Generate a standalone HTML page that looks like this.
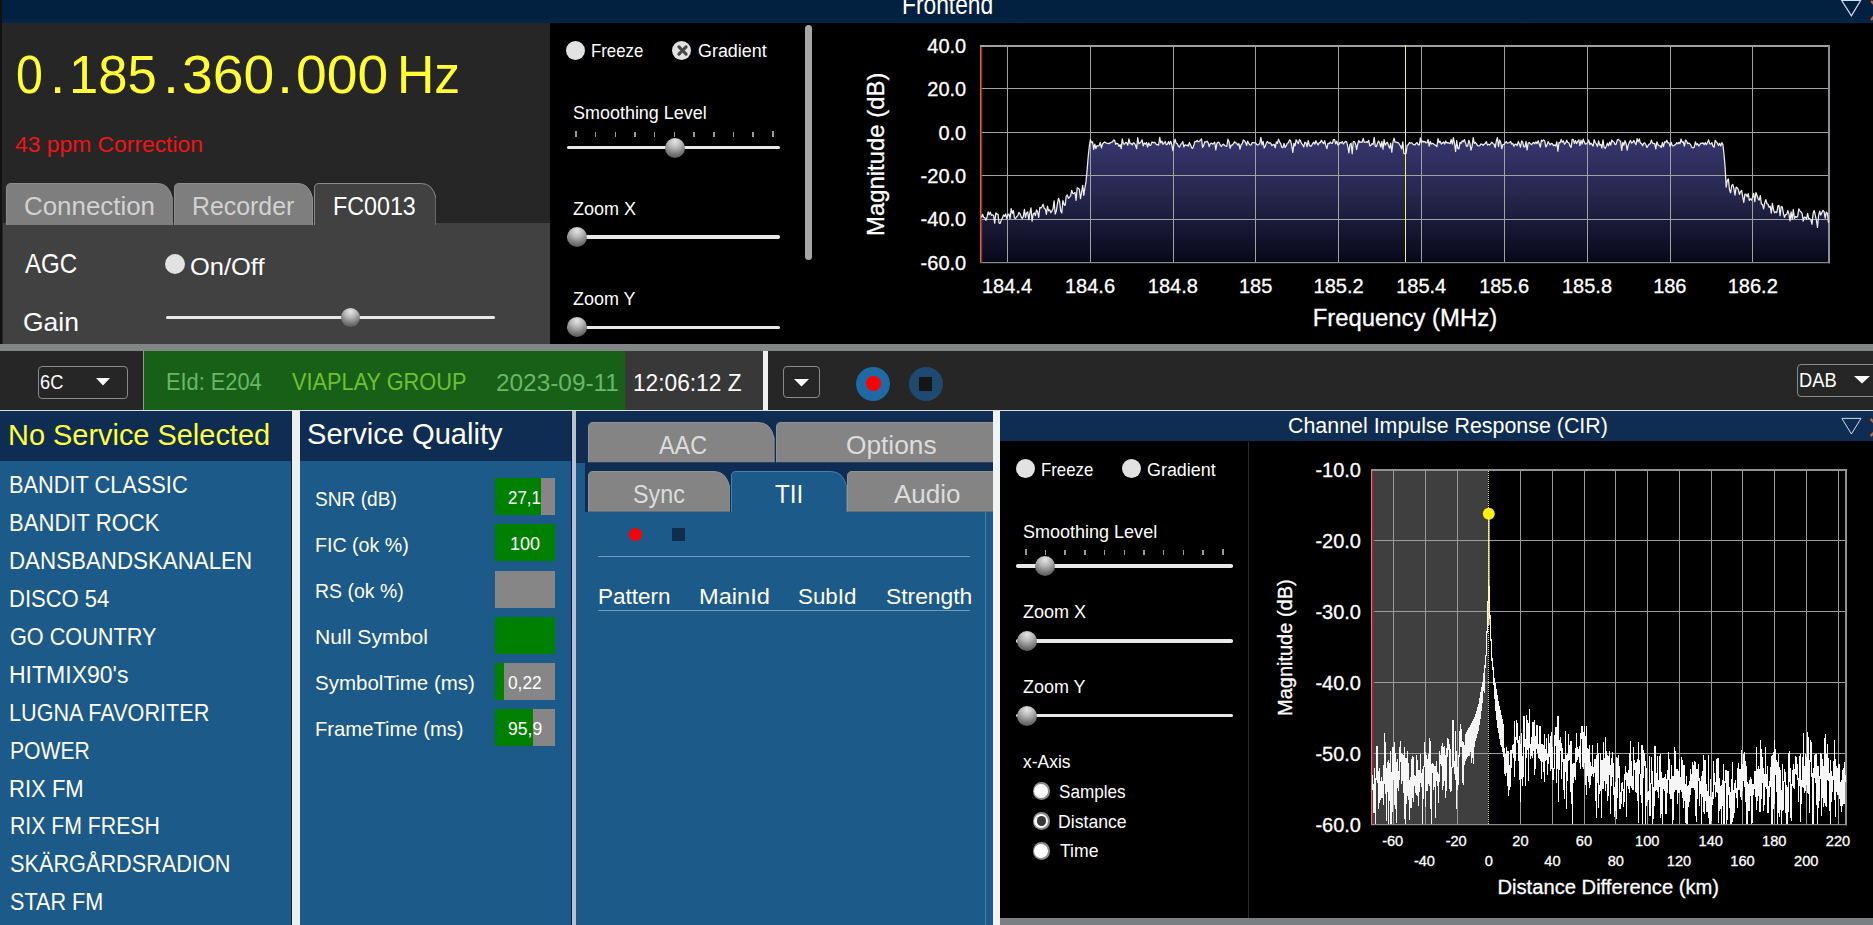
<!DOCTYPE html>
<html><head><meta charset="utf-8"><title>DAB Frontend</title>
<style>
html,body{margin:0;padding:0;background:#000;}
body{width:1873px;height:925px;position:relative;overflow:hidden;font-family:"Liberation Sans",sans-serif;}
.r{position:absolute;display:block;}
.t{position:absolute;display:block;white-space:pre;line-height:1;transform-origin:0 50%;}
.c{-webkit-text-stroke:0.3px #fff;}
</style></head><body>
<div class="r" style="left:0px;top:0px;width:1873px;height:22.8px;background:linear-gradient(#022040,#022040 75%,#06264a);"></div>
<span class="t" style="left:901.68px;top:-7.76px;font-size:27.00px;color:#fff;transform:scaleX(0.8433);">Frontend</span>
<svg class="r" style="left:1836px;top:0" width="37" height="23"><path d="M5.7 0.5 L24.6 0.5 L15.4 15.9 Z" fill="none" stroke="#cfe0f5" stroke-width="1.2"/><path d="M35 1 L40 6 M35 20 L40 14" stroke="#c0673a" stroke-width="2.4"/></svg>
<div class="r" style="left:0px;top:23px;width:550px;height:322px;background:#262626;"></div>
<div class="r" style="left:0px;top:0px;width:1.5px;height:925px;background:#111;"></div>
<span class="t" style="left:15.97px;top:46.69px;font-size:54.00px;color:#ffff33;transform:scaleX(0.8946);">0</span>
<span class="t" style="left:49.76px;top:46.69px;font-size:54.00px;color:#ffff33;transform:scaleX(1.0159);">.</span>
<span class="t" style="left:68.86px;top:46.69px;font-size:54.00px;color:#ffff33;transform:scaleX(0.9736);">185</span>
<span class="t" style="left:163.39px;top:46.69px;font-size:54.00px;color:#ffff33;transform:scaleX(1.0713);">.</span>
<span class="t" style="left:182.19px;top:46.69px;font-size:54.00px;color:#ffff33;transform:scaleX(1.0236);">360</span>
<span class="t" style="left:277.09px;top:46.69px;font-size:54.00px;color:#ffff33;transform:scaleX(1.0713);">.</span>
<span class="t" style="left:296.39px;top:46.69px;font-size:54.00px;color:#ffff33;transform:scaleX(1.0225);">000</span>
<span class="t" style="left:396.66px;top:46.69px;font-size:54.00px;color:#ffff33;transform:scaleX(0.9582);">Hz</span>
<span class="t" style="left:15.04px;top:134.38px;font-size:22.00px;color:#f01414;transform:scaleX(1.0386);">43 ppm Correction</span>
<div class="r" style="left:3px;top:223px;width:547.5px;height:121.6px;background:#414141;"></div>
<svg class="r" style="left:6.3px;top:182.9px" width="166.79999999999998" height="42.099999999999994"><path d="M0.5 42.099999999999994 L0.5 5 Q0.5 0.5 5 0.5 L151.79999999999998 0.5 Q163.0 0.5 166.29999999999998 15 L166.29999999999998 42.099999999999994 Z" fill="#7e7e7e"/><path d="M0.5 42.099999999999994 L0.5 5 Q0.5 0.5 5 0.5 L151.79999999999998 0.5 Q163.0 0.5 166.29999999999998 15 L166.29999999999998 42.099999999999994" fill="none" stroke="#8e8e8e" stroke-width="1"/></svg>
<svg class="r" style="left:174.4px;top:182.9px" width="138.99999999999997" height="42.099999999999994"><path d="M0.5 42.099999999999994 L0.5 5 Q0.5 0.5 5 0.5 L123.99999999999997 0.5 Q135.2 0.5 138.49999999999997 15 L138.49999999999997 42.099999999999994 Z" fill="#7e7e7e"/><path d="M0.5 42.099999999999994 L0.5 5 Q0.5 0.5 5 0.5 L123.99999999999997 0.5 Q135.2 0.5 138.49999999999997 15 L138.49999999999997 42.099999999999994" fill="none" stroke="#8e8e8e" stroke-width="1"/></svg>
<svg class="r" style="left:313.5px;top:182.9px" width="122.5" height="42.599999999999994"><path d="M0.5 42.599999999999994 L0.5 5 Q0.5 0.5 5 0.5 L107.5 0.5 Q118.8 0.5 122.0 15 L122.0 42.599999999999994 Z" fill="#414141"/><path d="M0.5 42.599999999999994 L0.5 5 Q0.5 0.5 5 0.5 L107.5 0.5 Q118.8 0.5 122.0 15 L122.0 42.599999999999994" fill="none" stroke="#8a8a8a" stroke-width="1"/></svg>
<span class="t" style="left:24.41px;top:194.47px;font-size:25.44px;color:#d2d2d2;transform:scaleX(1.0175);">Connection</span>
<span class="t" style="left:192.01px;top:194.47px;font-size:25.44px;color:#d2d2d2;transform:scaleX(0.9779);">Recorder</span>
<span class="t" style="left:332.74px;top:194.27px;font-size:25.44px;color:#fff;transform:scaleX(0.9144);">FC0013</span>
<span class="t" style="left:24.50px;top:250.96px;font-size:26.74px;color:#fff;transform:scaleX(0.9026);">AGC</span>
<div class="r" style="left:165px;top:253.5px;width:20px;height:20px;background:#e2e2e2;border-radius:50%"></div>
<span class="t" style="left:190.15px;top:255.38px;font-size:24.71px;color:#fff;transform:scaleX(1.0299);">On/Off</span>
<span class="t" style="left:23.18px;top:309.01px;font-size:26.45px;color:#fff;transform:scaleX(1.0008);">Gain</span>
<div class="r" style="left:165.6px;top:315.5px;width:329.0px;height:3.6px;background:#e8e8e8;border-radius:1.8px"></div>
<div class="r" style="left:341.1px;top:307.8px;width:19.0px;height:19.0px;background:radial-gradient(circle at 50% 18%,#e6e6e6,#b4b4b4 35%,#7a7a7a 65%,#4a4a4a 95%);border-radius:50%"></div>
<div class="r" style="left:550px;top:23px;width:1323px;height:321.5px;background:#000;"></div>
<div class="r" style="left:565.9px;top:40.7px;width:19.0px;height:19.0px;background:#e2e2e2;border-radius:50%"></div>
<span class="t" style="left:590.66px;top:41.87px;font-size:18.46px;color:#fff;transform:scaleX(0.9106);">Freeze</span>
<div class="r" style="left:672.2px;top:40.7px;width:19.0px;height:19.0px;background:#e2e2e2;border-radius:50%"></div>
<svg class="r" style="left:672.5px;top:40.7px" width="19" height="19"><path d="M5.9 5.9 L13.1 13.1 M13.1 5.9 L5.9 13.1" stroke="#484848" stroke-width="3.1" stroke-linecap="round"/></svg>
<span class="t" style="left:697.50px;top:41.87px;font-size:18.46px;color:#fff;transform:scaleX(0.9714);">Gradient</span>
<span class="t" style="left:572.79px;top:103.77px;font-size:18.46px;color:#fff;transform:scaleX(0.9738);">Smoothing Level</span>
<div class="r" style="left:575.1px;top:131px;width:1.6px;height:6px;background:#9a9a9a;"></div>
<div class="r" style="left:594.8px;top:132px;width:1.6px;height:5px;background:#9a9a9a;"></div>
<div class="r" style="left:614.5px;top:132px;width:1.6px;height:5px;background:#9a9a9a;"></div>
<div class="r" style="left:634.2px;top:132px;width:1.6px;height:5px;background:#9a9a9a;"></div>
<div class="r" style="left:653.9px;top:132px;width:1.6px;height:5px;background:#9a9a9a;"></div>
<div class="r" style="left:673.6px;top:132px;width:1.6px;height:5px;background:#9a9a9a;"></div>
<div class="r" style="left:693.3px;top:132px;width:1.6px;height:5px;background:#9a9a9a;"></div>
<div class="r" style="left:713.0px;top:132px;width:1.6px;height:5px;background:#9a9a9a;"></div>
<div class="r" style="left:732.7px;top:132px;width:1.6px;height:5px;background:#9a9a9a;"></div>
<div class="r" style="left:752.4px;top:132px;width:1.6px;height:5px;background:#9a9a9a;"></div>
<div class="r" style="left:772.1px;top:131px;width:1.6px;height:6px;background:#9a9a9a;"></div>
<div class="r" style="left:566.6px;top:145.7px;width:213.29999999999995px;height:3.6px;background:#e8e8e8;border-radius:1.8px"></div>
<div class="r" style="left:664.5px;top:137.5px;width:20px;height:20px;background:radial-gradient(circle at 50% 18%,#e6e6e6,#b4b4b4 35%,#7a7a7a 65%,#4a4a4a 95%);border-radius:50%"></div>
<span class="t" style="left:572.86px;top:200.47px;font-size:18.46px;color:#fff;transform:scaleX(0.9777);">Zoom X</span>
<div class="r" style="left:566.6px;top:235.2px;width:213.29999999999995px;height:3.6px;background:#e8e8e8;border-radius:1.8px"></div>
<div class="r" style="left:566.6px;top:227px;width:20px;height:20px;background:radial-gradient(circle at 50% 18%,#e6e6e6,#b4b4b4 35%,#7a7a7a 65%,#4a4a4a 95%);border-radius:50%"></div>
<span class="t" style="left:572.86px;top:289.97px;font-size:18.46px;color:#fff;transform:scaleX(0.9725);">Zoom Y</span>
<div class="r" style="left:566.6px;top:325.59999999999997px;width:213.29999999999995px;height:3.6px;background:#e8e8e8;border-radius:1.8px"></div>
<div class="r" style="left:566.6px;top:317.4px;width:20px;height:20px;background:radial-gradient(circle at 50% 18%,#e6e6e6,#b4b4b4 35%,#7a7a7a 65%,#4a4a4a 95%);border-radius:50%"></div>
<div class="r" style="left:804.5px;top:24.5px;width:7px;height:235.5px;background:#a6a6a6;border-radius:3.5px"></div>
<svg class="r" style="left:981px;top:45.0px;overflow:visible" width="848.5" height="217.0"><defs><linearGradient id="g1" x1="0" y1="0" x2="0" y2="1"><stop offset="0" stop-color="#36366e"/><stop offset="0.45" stop-color="#27274f"/><stop offset="1" stop-color="#08081a"/></linearGradient></defs><polygon points="0,217.0 0.5,172.5 1.6,169.3 2.7,172.4 3.8,172.7 4.9,175.3 6.0,172.3 7.1,166.8 8.2,169.7 9.3,167.1 10.4,170.4 11.5,169.8 12.6,170.6 13.7,178.2 14.8,167.8 15.9,169.2 17.0,169.2 18.1,178.2 19.2,178.4 20.3,174.9 21.4,173.1 22.5,169.9 23.6,171.3 24.7,168.9 25.8,173.6 26.9,169.6 28.0,169.2 29.1,173.5 30.2,163.6 31.3,168.3 32.4,165.6 33.5,173.0 34.6,173.4 35.7,171.7 36.8,170.6 37.9,167.4 39.0,168.8 40.1,171.6 41.2,173.5 42.3,171.6 43.4,164.3 44.5,172.4 45.6,167.9 46.7,167.0 47.8,174.7 48.9,168.2 50.0,162.8 51.1,176.2 52.2,169.0 53.3,167.9 54.4,170.6 55.5,164.9 56.6,166.9 57.7,172.4 58.8,162.7 59.9,163.0 61.0,161.6 62.1,159.2 63.2,163.3 64.3,164.0 65.4,169.4 66.5,161.2 67.6,165.8 68.7,164.8 69.8,167.7 70.9,166.1 72.0,163.8 73.1,155.9 74.2,169.1 75.3,166.2 76.4,158.7 77.5,153.3 78.6,156.3 79.7,166.0 80.8,168.0 81.9,155.5 83.0,159.5 84.1,160.4 85.2,151.2 86.3,150.0 87.4,153.3 88.5,152.2 89.6,150.8 90.7,145.3 91.8,148.6 92.9,148.3 94.0,147.4 95.1,155.3 96.2,142.8 97.3,143.3 98.4,144.2 99.5,153.7 100.6,147.3 101.7,140.4 102.8,150.4 103.9,142.8 105.0,136.8 106.1,125.4 107.2,111.8 108.3,101.3 109.4,94.6 110.5,97.6 111.6,96.8 112.7,104.3 113.8,99.2 114.9,103.5 116.0,100.6 117.1,100.8 118.2,100.6 119.3,97.4 120.4,102.9 121.5,99.2 122.6,97.7 123.7,96.9 124.8,97.7 125.9,98.3 127.0,98.3 128.1,98.6 129.2,97.9 130.3,97.3 131.4,96.9 132.5,95.1 133.6,95.2 134.7,99.3 135.8,98.2 136.9,98.7 138.0,101.4 139.1,99.6 140.2,103.6 141.3,93.8 142.4,98.9 143.5,99.2 144.6,97.3 145.7,97.9 146.8,100.3 147.9,93.9 149.0,98.7 150.1,98.4 151.2,99.9 152.3,97.8 153.4,98.2 154.5,100.3 155.6,103.6 156.7,92.6 157.8,98.7 158.9,98.1 160.0,96.8 161.1,94.8 162.2,100.9 163.3,98.0 164.4,99.2 165.5,97.5 166.6,102.0 167.7,97.8 168.8,100.3 169.9,100.1 171.0,96.9 172.1,97.7 173.2,97.3 174.3,97.9 175.4,99.5 176.5,99.5 177.6,100.1 178.7,92.3 179.8,97.8 180.9,96.1 182.0,99.3 183.1,97.9 184.2,96.6 185.3,99.8 186.4,99.2 187.5,96.5 188.6,99.4 189.7,96.3 190.8,99.6 191.9,105.6 193.0,98.9 194.1,94.2 195.2,98.2 196.3,98.8 197.4,101.2 198.5,102.1 199.6,99.7 200.7,98.3 201.8,96.5 202.9,101.9 204.0,99.8 205.1,100.4 206.2,100.1 207.3,101.0 208.4,97.5 209.5,99.8 210.6,102.7 211.7,103.4 212.8,100.3 213.9,96.5 215.0,96.6 216.1,95.3 217.2,96.8 218.3,96.3 219.4,95.3 220.5,93.9 221.6,102.3 222.7,100.4 223.8,96.7 224.9,97.0 226.0,96.2 227.1,97.6 228.2,101.6 229.3,98.7 230.4,98.1 231.5,99.1 232.6,98.4 233.7,97.2 234.8,104.9 235.9,98.5 237.0,97.1 238.1,97.6 239.2,99.9 240.3,101.5 241.4,99.8 242.5,99.2 243.6,100.5 244.7,101.0 245.8,101.4 246.9,94.2 248.0,96.5 249.1,103.2 250.2,100.0 251.3,100.0 252.4,98.6 253.5,96.8 254.6,97.8 255.7,98.2 256.8,100.2 257.9,98.6 259.0,104.1 260.1,99.7 261.2,98.8 262.3,95.0 263.4,95.7 264.5,97.1 265.6,100.3 266.7,96.2 267.8,98.5 268.9,99.8 270.0,100.1 271.1,97.7 272.2,97.7 273.3,97.8 274.4,97.5 275.5,99.2 276.6,99.9 277.7,99.6 278.8,98.0 279.9,92.4 281.0,99.8 282.1,96.4 283.2,103.0 284.3,101.0 285.4,97.9 286.5,96.5 287.6,98.2 288.7,97.8 289.8,98.2 290.9,100.7 292.0,99.7 293.1,99.3 294.2,102.9 295.3,97.0 296.4,98.4 297.5,94.1 298.6,97.1 299.7,98.7 300.8,102.4 301.9,102.6 303.0,98.4 304.1,102.5 305.2,100.7 306.3,98.2 307.4,97.7 308.5,94.9 309.6,95.6 310.7,100.7 311.8,107.3 312.9,98.3 314.0,101.0 315.1,94.9 316.2,96.8 317.3,98.7 318.4,94.6 319.5,95.7 320.6,98.7 321.7,99.9 322.8,101.9 323.9,97.2 325.0,97.7 326.1,101.8 327.2,95.5 328.3,99.9 329.4,101.4 330.5,100.8 331.6,98.6 332.7,97.1 333.8,99.2 334.9,95.8 336.0,98.0 337.1,100.0 338.2,97.7 339.3,97.6 340.4,95.4 341.5,97.1 342.6,98.7 343.7,95.6 344.8,100.6 345.9,103.6 347.0,98.3 348.1,98.7 349.2,97.1 350.3,98.2 351.4,98.4 352.5,94.5 353.6,94.7 354.7,98.8 355.8,96.2 356.9,100.1 358.0,99.4 359.1,97.3 360.2,98.0 361.3,96.7 362.4,99.0 363.5,97.5 364.6,96.3 365.7,97.1 366.8,101.3 367.9,107.9 369.0,99.4 370.1,98.2 371.2,108.8 372.3,96.5 373.4,96.5 374.5,98.7 375.6,104.5 376.7,99.2 377.8,95.5 378.9,97.5 380.0,97.0 381.1,97.4 382.2,93.4 383.3,97.3 384.4,97.2 385.5,96.9 386.6,97.4 387.7,95.4 388.8,100.8 389.9,100.5 391.0,98.6 392.1,99.3 393.2,92.4 394.3,101.4 395.4,101.6 396.5,98.3 397.6,96.0 398.7,98.0 399.8,102.1 400.9,96.3 402.0,104.2 403.1,94.5 404.2,100.2 405.3,98.3 406.4,97.2 407.5,100.5 408.6,103.2 409.7,98.1 410.8,107.2 411.9,97.7 413.0,93.2 414.1,97.1 415.2,97.1 416.3,97.6 417.4,97.7 418.5,99.5 419.6,101.1 420.7,103.9 421.8,96.9 422.9,108.5 424.0,108.5 425.1,108.5 426.2,100.2 427.3,99.8 428.4,97.5 429.5,98.2 430.6,97.7 431.7,98.9 432.8,99.7 433.9,99.8 435.0,98.3 436.1,97.6 437.2,99.8 438.3,99.9 439.4,92.9 440.5,97.9 441.6,96.0 442.7,96.9 443.8,96.5 444.9,97.8 446.0,97.7 447.1,94.5 448.2,101.1 449.3,96.4 450.4,99.1 451.5,98.3 452.6,98.9 453.7,99.7 454.8,100.5 455.9,101.7 457.0,93.7 458.1,97.7 459.2,96.2 460.3,99.0 461.4,98.0 462.5,97.0 463.6,99.0 464.7,96.0 465.8,97.9 466.9,97.7 468.0,98.1 469.1,98.5 470.2,94.5 471.3,99.1 472.4,92.6 473.5,98.7 474.6,106.5 475.7,95.5 476.8,103.4 477.9,103.9 479.0,97.4 480.1,98.3 481.2,95.9 482.3,96.6 483.4,94.6 484.5,97.9 485.6,101.4 486.7,100.9 487.8,95.3 488.9,98.3 490.0,105.2 491.1,101.2 492.2,92.6 493.3,98.4 494.4,97.4 495.5,98.9 496.6,100.7 497.7,100.8 498.8,100.6 499.9,98.9 501.0,99.3 502.1,100.3 503.2,99.2 504.3,98.3 505.4,96.6 506.5,100.1 507.6,99.3 508.7,100.0 509.8,98.4 510.9,97.2 512.0,98.4 513.1,99.3 514.2,102.6 515.3,96.0 516.4,92.6 517.5,101.5 518.6,95.0 519.7,97.3 520.8,103.7 521.9,99.5 523.0,99.4 524.1,97.8 525.2,96.6 526.3,98.2 527.4,98.0 528.5,97.5 529.6,96.5 530.7,99.1 531.8,98.5 532.9,101.4 534.0,99.3 535.1,99.1 536.2,100.5 537.3,96.4 538.4,98.9 539.5,102.2 540.6,96.0 541.7,97.1 542.8,101.9 543.9,102.0 545.0,96.4 546.1,104.8 547.2,98.0 548.3,97.5 549.4,98.8 550.5,99.6 551.6,98.3 552.7,97.3 553.8,98.8 554.9,96.8 556.0,98.6 557.1,95.7 558.2,98.7 559.3,102.1 560.4,95.1 561.5,96.2 562.6,94.9 563.7,95.9 564.8,101.8 565.9,100.5 567.0,96.7 568.1,98.2 569.2,99.9 570.3,98.3 571.4,98.9 572.5,100.6 573.6,100.0 574.7,100.9 575.8,96.9 576.9,106.1 578.0,97.5 579.1,97.9 580.2,94.4 581.3,97.2 582.4,96.0 583.5,99.2 584.6,97.9 585.7,95.2 586.8,97.5 587.9,97.8 589.0,101.0 590.1,102.3 591.2,94.4 592.3,94.6 593.4,98.4 594.5,95.7 595.6,98.6 596.7,96.3 597.8,94.8 598.9,100.6 600.0,95.2 601.1,99.0 602.2,94.2 603.3,96.9 604.4,99.1 605.5,98.6 606.6,97.7 607.7,95.1 608.8,99.6 609.9,98.1 611.0,99.4 612.1,101.2 613.2,94.7 614.3,97.5 615.4,99.0 616.5,101.5 617.6,95.8 618.7,100.2 619.8,99.3 620.9,103.2 622.0,94.9 623.1,102.5 624.2,103.3 625.3,101.3 626.4,98.2 627.5,100.8 628.6,97.2 629.7,100.0 630.8,95.0 631.9,96.6 633.0,97.0 634.1,99.6 635.2,99.1 636.3,94.8 637.4,94.3 638.5,95.6 639.6,96.5 640.7,105.4 641.8,97.3 642.9,100.2 644.0,95.6 645.1,98.5 646.2,105.1 647.3,99.7 648.4,97.4 649.5,95.4 650.6,98.1 651.7,97.3 652.8,95.3 653.9,97.8 655.0,99.6 656.1,93.7 657.2,96.9 658.3,93.9 659.4,98.1 660.5,98.4 661.6,100.8 662.7,98.2 663.8,97.7 664.9,99.8 666.0,102.4 667.1,100.6 668.2,99.1 669.3,98.6 670.4,95.1 671.5,98.0 672.6,98.6 673.7,98.5 674.8,103.8 675.9,96.8 677.0,99.7 678.1,100.7 679.2,100.9 680.3,102.6 681.4,97.5 682.5,101.7 683.6,96.9 684.7,97.5 685.8,95.2 686.9,98.0 688.0,97.9 689.1,101.4 690.2,97.3 691.3,100.6 692.4,100.9 693.5,100.1 694.6,99.5 695.7,97.6 696.8,98.8 697.9,97.3 699.0,98.7 700.1,94.0 701.2,97.4 702.3,96.8 703.4,101.2 704.5,95.2 705.6,96.1 706.7,98.7 707.8,98.1 708.9,98.8 710.0,100.4 711.1,102.7 712.2,102.8 713.3,101.9 714.4,96.8 715.5,99.8 716.6,98.7 717.7,101.0 718.8,99.6 719.9,98.1 721.0,98.3 722.1,97.9 723.2,99.7 724.3,97.4 725.4,99.8 726.5,97.5 727.6,94.9 728.7,98.9 729.8,99.0 730.9,97.6 732.0,101.4 733.1,102.1 734.2,95.4 735.3,96.8 736.4,98.1 737.5,100.5 738.6,98.3 739.7,101.0 740.8,97.6 741.9,99.6 743.0,109.2 744.1,122.0 745.2,142.1 746.3,135.3 747.4,133.9 748.5,144.8 749.6,147.8 750.7,140.5 751.8,139.5 752.9,143.3 754.0,150.1 755.1,142.2 756.2,142.9 757.3,144.5 758.4,149.4 759.5,146.8 760.6,145.4 761.7,151.6 762.8,157.5 763.9,149.2 765.0,149.2 766.1,151.7 767.2,148.6 768.3,155.3 769.4,153.8 770.5,155.2 771.6,152.1 772.7,148.4 773.8,156.6 774.9,147.6 776.0,150.3 777.1,153.8 778.2,155.1 779.3,150.7 780.4,159.2 781.5,159.4 782.6,163.8 783.7,157.9 784.8,154.7 785.9,158.5 787.0,159.3 788.1,162.3 789.2,161.2 790.3,168.1 791.4,158.3 792.5,164.7 793.6,167.9 794.7,166.8 795.8,167.5 796.9,160.9 798.0,160.4 799.1,170.6 800.2,161.5 801.3,162.0 802.4,168.3 803.5,172.3 804.6,169.6 805.7,169.4 806.8,165.6 807.9,168.8 809.0,175.9 810.1,166.8 811.2,174.3 812.3,164.5 813.4,173.4 814.5,171.5 815.6,172.3 816.7,171.2 817.8,163.8 818.9,165.8 820.0,167.0 821.1,168.4 822.2,176.2 823.3,172.1 824.4,172.4 825.5,174.3 826.6,168.3 827.7,173.5 828.8,173.5 829.9,175.0 831.0,179.3 832.1,168.4 833.2,165.5 834.3,170.3 835.4,175.1 836.5,182.3 837.6,170.5 838.7,166.2 839.8,170.1 840.9,167.5 842.0,165.3 843.1,166.7 844.2,173.2 845.3,167.1 846.4,168.2 847.5,177.8 848.5,217.0" fill="url(#g1)"/><line x1="26.5" y1="0" x2="26.5" y2="217.0" stroke="#a2a2a2" stroke-width="1"/><line x1="109.5" y1="0" x2="109.5" y2="217.0" stroke="#a2a2a2" stroke-width="1"/><line x1="192.5" y1="0" x2="192.5" y2="217.0" stroke="#a2a2a2" stroke-width="1"/><line x1="274.5" y1="0" x2="274.5" y2="217.0" stroke="#a2a2a2" stroke-width="1"/><line x1="357.5" y1="0" x2="357.5" y2="217.0" stroke="#a2a2a2" stroke-width="1"/><line x1="440.5" y1="0" x2="440.5" y2="217.0" stroke="#a2a2a2" stroke-width="1"/><line x1="523.5" y1="0" x2="523.5" y2="217.0" stroke="#a2a2a2" stroke-width="1"/><line x1="606.5" y1="0" x2="606.5" y2="217.0" stroke="#a2a2a2" stroke-width="1"/><line x1="689.5" y1="0" x2="689.5" y2="217.0" stroke="#a2a2a2" stroke-width="1"/><line x1="771.5" y1="0" x2="771.5" y2="217.0" stroke="#a2a2a2" stroke-width="1"/><line x1="0" y1="0.5" x2="848.5" y2="0.5" stroke="#a2a2a2" stroke-width="1"/><line x1="0" y1="43.5" x2="848.5" y2="43.5" stroke="#a2a2a2" stroke-width="1"/><line x1="0" y1="87.5" x2="848.5" y2="87.5" stroke="#a2a2a2" stroke-width="1"/><line x1="0" y1="130.5" x2="848.5" y2="130.5" stroke="#a2a2a2" stroke-width="1"/><line x1="0" y1="174.5" x2="848.5" y2="174.5" stroke="#a2a2a2" stroke-width="1"/><line x1="0" y1="217.5" x2="848.5" y2="217.5" stroke="#a2a2a2" stroke-width="1"/><rect x="-1" y="0" width="850" height="2" fill="#a0a0a0"/><rect x="847" y="0" width="2" height="218.2" fill="#8e8e96"/><rect x="-1" y="217.0" width="850" height="1.2" fill="#8a8a92"/><rect x="-1" y="2" width="1.2" height="216.0" fill="#d86252"/><rect x="0.2" y="2" width="1.0" height="216.0" fill="#a43a30"/><line x1="424.5" y1="0" x2="424.5" y2="217.0" stroke="#f4f45a" stroke-width="1"/><polyline points="0.5,172.5 1.6,169.3 2.7,172.4 3.8,172.7 4.9,175.3 6.0,172.3 7.1,166.8 8.2,169.7 9.3,167.1 10.4,170.4 11.5,169.8 12.6,170.6 13.7,178.2 14.8,167.8 15.9,169.2 17.0,169.2 18.1,178.2 19.2,178.4 20.3,174.9 21.4,173.1 22.5,169.9 23.6,171.3 24.7,168.9 25.8,173.6 26.9,169.6 28.0,169.2 29.1,173.5 30.2,163.6 31.3,168.3 32.4,165.6 33.5,173.0 34.6,173.4 35.7,171.7 36.8,170.6 37.9,167.4 39.0,168.8 40.1,171.6 41.2,173.5 42.3,171.6 43.4,164.3 44.5,172.4 45.6,167.9 46.7,167.0 47.8,174.7 48.9,168.2 50.0,162.8 51.1,176.2 52.2,169.0 53.3,167.9 54.4,170.6 55.5,164.9 56.6,166.9 57.7,172.4 58.8,162.7 59.9,163.0 61.0,161.6 62.1,159.2 63.2,163.3 64.3,164.0 65.4,169.4 66.5,161.2 67.6,165.8 68.7,164.8 69.8,167.7 70.9,166.1 72.0,163.8 73.1,155.9 74.2,169.1 75.3,166.2 76.4,158.7 77.5,153.3 78.6,156.3 79.7,166.0 80.8,168.0 81.9,155.5 83.0,159.5 84.1,160.4 85.2,151.2 86.3,150.0 87.4,153.3 88.5,152.2 89.6,150.8 90.7,145.3 91.8,148.6 92.9,148.3 94.0,147.4 95.1,155.3 96.2,142.8 97.3,143.3 98.4,144.2 99.5,153.7 100.6,147.3 101.7,140.4 102.8,150.4 103.9,142.8 105.0,136.8 106.1,125.4 107.2,111.8 108.3,101.3 109.4,94.6 110.5,97.6 111.6,96.8 112.7,104.3 113.8,99.2 114.9,103.5 116.0,100.6 117.1,100.8 118.2,100.6 119.3,97.4 120.4,102.9 121.5,99.2 122.6,97.7 123.7,96.9 124.8,97.7 125.9,98.3 127.0,98.3 128.1,98.6 129.2,97.9 130.3,97.3 131.4,96.9 132.5,95.1 133.6,95.2 134.7,99.3 135.8,98.2 136.9,98.7 138.0,101.4 139.1,99.6 140.2,103.6 141.3,93.8 142.4,98.9 143.5,99.2 144.6,97.3 145.7,97.9 146.8,100.3 147.9,93.9 149.0,98.7 150.1,98.4 151.2,99.9 152.3,97.8 153.4,98.2 154.5,100.3 155.6,103.6 156.7,92.6 157.8,98.7 158.9,98.1 160.0,96.8 161.1,94.8 162.2,100.9 163.3,98.0 164.4,99.2 165.5,97.5 166.6,102.0 167.7,97.8 168.8,100.3 169.9,100.1 171.0,96.9 172.1,97.7 173.2,97.3 174.3,97.9 175.4,99.5 176.5,99.5 177.6,100.1 178.7,92.3 179.8,97.8 180.9,96.1 182.0,99.3 183.1,97.9 184.2,96.6 185.3,99.8 186.4,99.2 187.5,96.5 188.6,99.4 189.7,96.3 190.8,99.6 191.9,105.6 193.0,98.9 194.1,94.2 195.2,98.2 196.3,98.8 197.4,101.2 198.5,102.1 199.6,99.7 200.7,98.3 201.8,96.5 202.9,101.9 204.0,99.8 205.1,100.4 206.2,100.1 207.3,101.0 208.4,97.5 209.5,99.8 210.6,102.7 211.7,103.4 212.8,100.3 213.9,96.5 215.0,96.6 216.1,95.3 217.2,96.8 218.3,96.3 219.4,95.3 220.5,93.9 221.6,102.3 222.7,100.4 223.8,96.7 224.9,97.0 226.0,96.2 227.1,97.6 228.2,101.6 229.3,98.7 230.4,98.1 231.5,99.1 232.6,98.4 233.7,97.2 234.8,104.9 235.9,98.5 237.0,97.1 238.1,97.6 239.2,99.9 240.3,101.5 241.4,99.8 242.5,99.2 243.6,100.5 244.7,101.0 245.8,101.4 246.9,94.2 248.0,96.5 249.1,103.2 250.2,100.0 251.3,100.0 252.4,98.6 253.5,96.8 254.6,97.8 255.7,98.2 256.8,100.2 257.9,98.6 259.0,104.1 260.1,99.7 261.2,98.8 262.3,95.0 263.4,95.7 264.5,97.1 265.6,100.3 266.7,96.2 267.8,98.5 268.9,99.8 270.0,100.1 271.1,97.7 272.2,97.7 273.3,97.8 274.4,97.5 275.5,99.2 276.6,99.9 277.7,99.6 278.8,98.0 279.9,92.4 281.0,99.8 282.1,96.4 283.2,103.0 284.3,101.0 285.4,97.9 286.5,96.5 287.6,98.2 288.7,97.8 289.8,98.2 290.9,100.7 292.0,99.7 293.1,99.3 294.2,102.9 295.3,97.0 296.4,98.4 297.5,94.1 298.6,97.1 299.7,98.7 300.8,102.4 301.9,102.6 303.0,98.4 304.1,102.5 305.2,100.7 306.3,98.2 307.4,97.7 308.5,94.9 309.6,95.6 310.7,100.7 311.8,107.3 312.9,98.3 314.0,101.0 315.1,94.9 316.2,96.8 317.3,98.7 318.4,94.6 319.5,95.7 320.6,98.7 321.7,99.9 322.8,101.9 323.9,97.2 325.0,97.7 326.1,101.8 327.2,95.5 328.3,99.9 329.4,101.4 330.5,100.8 331.6,98.6 332.7,97.1 333.8,99.2 334.9,95.8 336.0,98.0 337.1,100.0 338.2,97.7 339.3,97.6 340.4,95.4 341.5,97.1 342.6,98.7 343.7,95.6 344.8,100.6 345.9,103.6 347.0,98.3 348.1,98.7 349.2,97.1 350.3,98.2 351.4,98.4 352.5,94.5 353.6,94.7 354.7,98.8 355.8,96.2 356.9,100.1 358.0,99.4 359.1,97.3 360.2,98.0 361.3,96.7 362.4,99.0 363.5,97.5 364.6,96.3 365.7,97.1 366.8,101.3 367.9,107.9 369.0,99.4 370.1,98.2 371.2,108.8 372.3,96.5 373.4,96.5 374.5,98.7 375.6,104.5 376.7,99.2 377.8,95.5 378.9,97.5 380.0,97.0 381.1,97.4 382.2,93.4 383.3,97.3 384.4,97.2 385.5,96.9 386.6,97.4 387.7,95.4 388.8,100.8 389.9,100.5 391.0,98.6 392.1,99.3 393.2,92.4 394.3,101.4 395.4,101.6 396.5,98.3 397.6,96.0 398.7,98.0 399.8,102.1 400.9,96.3 402.0,104.2 403.1,94.5 404.2,100.2 405.3,98.3 406.4,97.2 407.5,100.5 408.6,103.2 409.7,98.1 410.8,107.2 411.9,97.7 413.0,93.2 414.1,97.1 415.2,97.1 416.3,97.6 417.4,97.7 418.5,99.5 419.6,101.1 420.7,103.9 421.8,96.9 422.9,108.5 424.0,108.5 425.1,108.5 426.2,100.2 427.3,99.8 428.4,97.5 429.5,98.2 430.6,97.7 431.7,98.9 432.8,99.7 433.9,99.8 435.0,98.3 436.1,97.6 437.2,99.8 438.3,99.9 439.4,92.9 440.5,97.9 441.6,96.0 442.7,96.9 443.8,96.5 444.9,97.8 446.0,97.7 447.1,94.5 448.2,101.1 449.3,96.4 450.4,99.1 451.5,98.3 452.6,98.9 453.7,99.7 454.8,100.5 455.9,101.7 457.0,93.7 458.1,97.7 459.2,96.2 460.3,99.0 461.4,98.0 462.5,97.0 463.6,99.0 464.7,96.0 465.8,97.9 466.9,97.7 468.0,98.1 469.1,98.5 470.2,94.5 471.3,99.1 472.4,92.6 473.5,98.7 474.6,106.5 475.7,95.5 476.8,103.4 477.9,103.9 479.0,97.4 480.1,98.3 481.2,95.9 482.3,96.6 483.4,94.6 484.5,97.9 485.6,101.4 486.7,100.9 487.8,95.3 488.9,98.3 490.0,105.2 491.1,101.2 492.2,92.6 493.3,98.4 494.4,97.4 495.5,98.9 496.6,100.7 497.7,100.8 498.8,100.6 499.9,98.9 501.0,99.3 502.1,100.3 503.2,99.2 504.3,98.3 505.4,96.6 506.5,100.1 507.6,99.3 508.7,100.0 509.8,98.4 510.9,97.2 512.0,98.4 513.1,99.3 514.2,102.6 515.3,96.0 516.4,92.6 517.5,101.5 518.6,95.0 519.7,97.3 520.8,103.7 521.9,99.5 523.0,99.4 524.1,97.8 525.2,96.6 526.3,98.2 527.4,98.0 528.5,97.5 529.6,96.5 530.7,99.1 531.8,98.5 532.9,101.4 534.0,99.3 535.1,99.1 536.2,100.5 537.3,96.4 538.4,98.9 539.5,102.2 540.6,96.0 541.7,97.1 542.8,101.9 543.9,102.0 545.0,96.4 546.1,104.8 547.2,98.0 548.3,97.5 549.4,98.8 550.5,99.6 551.6,98.3 552.7,97.3 553.8,98.8 554.9,96.8 556.0,98.6 557.1,95.7 558.2,98.7 559.3,102.1 560.4,95.1 561.5,96.2 562.6,94.9 563.7,95.9 564.8,101.8 565.9,100.5 567.0,96.7 568.1,98.2 569.2,99.9 570.3,98.3 571.4,98.9 572.5,100.6 573.6,100.0 574.7,100.9 575.8,96.9 576.9,106.1 578.0,97.5 579.1,97.9 580.2,94.4 581.3,97.2 582.4,96.0 583.5,99.2 584.6,97.9 585.7,95.2 586.8,97.5 587.9,97.8 589.0,101.0 590.1,102.3 591.2,94.4 592.3,94.6 593.4,98.4 594.5,95.7 595.6,98.6 596.7,96.3 597.8,94.8 598.9,100.6 600.0,95.2 601.1,99.0 602.2,94.2 603.3,96.9 604.4,99.1 605.5,98.6 606.6,97.7 607.7,95.1 608.8,99.6 609.9,98.1 611.0,99.4 612.1,101.2 613.2,94.7 614.3,97.5 615.4,99.0 616.5,101.5 617.6,95.8 618.7,100.2 619.8,99.3 620.9,103.2 622.0,94.9 623.1,102.5 624.2,103.3 625.3,101.3 626.4,98.2 627.5,100.8 628.6,97.2 629.7,100.0 630.8,95.0 631.9,96.6 633.0,97.0 634.1,99.6 635.2,99.1 636.3,94.8 637.4,94.3 638.5,95.6 639.6,96.5 640.7,105.4 641.8,97.3 642.9,100.2 644.0,95.6 645.1,98.5 646.2,105.1 647.3,99.7 648.4,97.4 649.5,95.4 650.6,98.1 651.7,97.3 652.8,95.3 653.9,97.8 655.0,99.6 656.1,93.7 657.2,96.9 658.3,93.9 659.4,98.1 660.5,98.4 661.6,100.8 662.7,98.2 663.8,97.7 664.9,99.8 666.0,102.4 667.1,100.6 668.2,99.1 669.3,98.6 670.4,95.1 671.5,98.0 672.6,98.6 673.7,98.5 674.8,103.8 675.9,96.8 677.0,99.7 678.1,100.7 679.2,100.9 680.3,102.6 681.4,97.5 682.5,101.7 683.6,96.9 684.7,97.5 685.8,95.2 686.9,98.0 688.0,97.9 689.1,101.4 690.2,97.3 691.3,100.6 692.4,100.9 693.5,100.1 694.6,99.5 695.7,97.6 696.8,98.8 697.9,97.3 699.0,98.7 700.1,94.0 701.2,97.4 702.3,96.8 703.4,101.2 704.5,95.2 705.6,96.1 706.7,98.7 707.8,98.1 708.9,98.8 710.0,100.4 711.1,102.7 712.2,102.8 713.3,101.9 714.4,96.8 715.5,99.8 716.6,98.7 717.7,101.0 718.8,99.6 719.9,98.1 721.0,98.3 722.1,97.9 723.2,99.7 724.3,97.4 725.4,99.8 726.5,97.5 727.6,94.9 728.7,98.9 729.8,99.0 730.9,97.6 732.0,101.4 733.1,102.1 734.2,95.4 735.3,96.8 736.4,98.1 737.5,100.5 738.6,98.3 739.7,101.0 740.8,97.6 741.9,99.6 743.0,109.2 744.1,122.0 745.2,142.1 746.3,135.3 747.4,133.9 748.5,144.8 749.6,147.8 750.7,140.5 751.8,139.5 752.9,143.3 754.0,150.1 755.1,142.2 756.2,142.9 757.3,144.5 758.4,149.4 759.5,146.8 760.6,145.4 761.7,151.6 762.8,157.5 763.9,149.2 765.0,149.2 766.1,151.7 767.2,148.6 768.3,155.3 769.4,153.8 770.5,155.2 771.6,152.1 772.7,148.4 773.8,156.6 774.9,147.6 776.0,150.3 777.1,153.8 778.2,155.1 779.3,150.7 780.4,159.2 781.5,159.4 782.6,163.8 783.7,157.9 784.8,154.7 785.9,158.5 787.0,159.3 788.1,162.3 789.2,161.2 790.3,168.1 791.4,158.3 792.5,164.7 793.6,167.9 794.7,166.8 795.8,167.5 796.9,160.9 798.0,160.4 799.1,170.6 800.2,161.5 801.3,162.0 802.4,168.3 803.5,172.3 804.6,169.6 805.7,169.4 806.8,165.6 807.9,168.8 809.0,175.9 810.1,166.8 811.2,174.3 812.3,164.5 813.4,173.4 814.5,171.5 815.6,172.3 816.7,171.2 817.8,163.8 818.9,165.8 820.0,167.0 821.1,168.4 822.2,176.2 823.3,172.1 824.4,172.4 825.5,174.3 826.6,168.3 827.7,173.5 828.8,173.5 829.9,175.0 831.0,179.3 832.1,168.4 833.2,165.5 834.3,170.3 835.4,175.1 836.5,182.3 837.6,170.5 838.7,166.2 839.8,170.1 840.9,167.5 842.0,165.3 843.1,166.7 844.2,173.2 845.3,167.1 846.4,168.2 847.5,177.8" fill="none" stroke="#efefef" stroke-width="1.25" stroke-linejoin="round"/></svg>
<span class="t c" style="left:927.30px;top:35.87px;font-size:20.00px;color:#fff;">40.0</span>
<span class="t c" style="left:927.30px;top:79.27px;font-size:20.00px;color:#fff;">20.0</span>
<span class="t c" style="left:938.40px;top:122.67px;font-size:20.00px;color:#fff;">0.0</span>
<span class="t c" style="left:920.60px;top:166.07px;font-size:20.00px;color:#fff;">-20.0</span>
<span class="t c" style="left:920.60px;top:209.47px;font-size:20.00px;color:#fff;">-40.0</span>
<span class="t c" style="left:920.60px;top:252.87px;font-size:20.00px;color:#fff;">-60.0</span>
<span class="t c" style="left:982.00px;top:275.67px;font-size:20.00px;color:#fff;">184.4</span>
<span class="t c" style="left:1064.98px;top:275.67px;font-size:20.00px;color:#fff;">184.6</span>
<span class="t c" style="left:1147.81px;top:275.67px;font-size:20.00px;color:#fff;">184.8</span>
<span class="t c" style="left:1238.99px;top:275.67px;font-size:20.00px;color:#fff;">185</span>
<span class="t c" style="left:1313.57px;top:275.67px;font-size:20.00px;color:#fff;">185.2</span>
<span class="t c" style="left:1396.15px;top:275.67px;font-size:20.00px;color:#fff;">185.4</span>
<span class="t c" style="left:1479.13px;top:275.67px;font-size:20.00px;color:#fff;">185.6</span>
<span class="t c" style="left:1561.96px;top:275.67px;font-size:20.00px;color:#fff;">185.8</span>
<span class="t c" style="left:1653.14px;top:275.67px;font-size:20.00px;color:#fff;">186</span>
<span class="t c" style="left:1727.72px;top:275.67px;font-size:20.00px;color:#fff;">186.2</span>
<span class="t c" style="left:1312.69px;top:305.79px;font-size:23.88px;color:#fff;">Frequency (MHz)</span>
<span class="t c" style="left:864.47px;top:236.41px;font-size:23.90px;color:#fff;transform-origin:0 0;transform:rotate(-90deg)">Magnitude (dB)</span>
<div class="r" style="left:0px;top:344.3px;width:1873px;height:7px;background:#808784;"></div>
<div class="r" style="left:0px;top:351.2px;width:1873px;height:58.6px;background:#262626;"></div>
<div class="r" style="left:0px;top:409.6px;width:1873px;height:1.2px;background:#d8dde2;"></div>
<div class="r" style="left:143px;top:351.2px;width:1px;height:58.4px;background:#9a9a9a;"></div>
<div class="r" style="left:144px;top:351.2px;width:481px;height:58.4px;background:#186018;"></div>
<div class="r" style="left:625px;top:351.2px;width:138px;height:58.4px;background:#383838;"></div>
<div class="r" style="left:763.2px;top:351.2px;width:4.9px;height:58.4px;background:#f0f0f0;"></div>
<div class="r" style="left:38px;top:365.7px;width:88.4px;height:31px;border:1px solid #8a8a8a;border-radius:4px;background:#262626"></div>
<span class="t" style="left:40.09px;top:371.73px;font-size:20.64px;color:#fff;transform:scaleX(0.8839);">6C</span>
<svg class="r" style="left:95.9px;top:378.3px" width="14" height="8"><path d="M0 0 L14 0 L7 7.5 Z" fill="#fff"/></svg>
<span class="t" style="left:166.06px;top:369.98px;font-size:24.71px;color:#68b868;transform:scaleX(0.8824);">EId: E204</span>
<span class="t" style="left:292.39px;top:370.38px;font-size:24.71px;color:#70c030;transform:scaleX(0.8803);">VIAPLAY GROUP</span>
<span class="t" style="left:495.88px;top:371.08px;font-size:24.00px;color:#68b868;transform:scaleX(1.0154);">2023-09-11</span>
<span class="t" style="left:632.70px;top:371.08px;font-size:24.00px;color:#fff;transform:scaleX(0.9456);">12:06:12 Z</span>
<div class="r" style="left:783px;top:366px;width:35.3px;height:30.3px;border:1px solid #8a8a8a;border-radius:4px;background:#262626"></div>
<svg class="r" style="left:793.7px;top:378.8px" width="15" height="8"><path d="M0 0 L15 0 L7.5 7.5 Z" fill="#fff"/></svg>
<div class="r" style="left:856.3px;top:366.8px;width:34px;height:34px;background:#1f69a5;border-radius:50%"></div>
<div class="r" style="left:865.8px;top:376.3px;width:15.0px;height:15.0px;background:#ff0000;border-radius:50%"></div>
<div class="r" style="left:908.5px;top:366.8px;width:34px;height:34px;background:#1f4a70;border-radius:50%"></div>
<div class="r" style="left:919.2px;top:376.8px;width:12.6px;height:14.2px;background:#161616;"></div>
<div class="r" style="left:1797px;top:363.8px;width:90px;height:31.5px;border:1px solid #8a8a8a;border-radius:4px;background:#262626"></div>
<span class="t" style="left:1799.24px;top:370.59px;font-size:19.62px;color:#fff;transform:scaleX(0.9324);">DAB</span>
<svg class="r" style="left:1854.2px;top:376.3px" width="16" height="8"><path d="M0 0 L16 0 L8 7.5 Z" fill="#fff"/></svg>
<div class="r" style="left:0px;top:410.8px;width:292.3px;height:514.2px;background:#1c5a89;"></div>
<div class="r" style="left:0px;top:410.8px;width:292.3px;height:50.2px;background:#0f2d52;"></div>
<span class="t" style="left:7.68px;top:421.04px;font-size:28.78px;color:#ffff3c;transform:scaleX(1.0055);">No Service Selected</span>
<span class="t" style="left:9.46px;top:474.34px;font-size:23.11px;color:#fff;transform:scaleX(0.9420);">BANDIT CLASSIC</span>
<span class="t" style="left:9.43px;top:512.24px;font-size:23.11px;color:#fff;transform:scaleX(0.9555);">BANDIT ROCK</span>
<span class="t" style="left:9.41px;top:550.14px;font-size:23.11px;color:#fff;transform:scaleX(0.9659);">DANSBANDSKANALEN</span>
<span class="t" style="left:9.44px;top:588.04px;font-size:23.11px;color:#fff;transform:scaleX(0.9530);">DISCO 54</span>
<span class="t" style="left:10.12px;top:625.94px;font-size:23.11px;color:#fff;transform:scaleX(0.9372);">GO COUNTRY</span>
<span class="t" style="left:9.36px;top:663.84px;font-size:23.11px;color:#fff;transform:scaleX(0.9959);">HITMIX90's</span>
<span class="t" style="left:9.47px;top:701.74px;font-size:23.11px;color:#fff;transform:scaleX(0.9360);">LUGNA FAVORITER</span>
<span class="t" style="left:9.51px;top:739.64px;font-size:23.11px;color:#fff;transform:scaleX(0.9140);">POWER</span>
<span class="t" style="left:9.44px;top:777.54px;font-size:23.11px;color:#fff;transform:scaleX(0.9540);">RIX FM</span>
<span class="t" style="left:9.50px;top:815.44px;font-size:23.11px;color:#fff;transform:scaleX(0.9188);">RIX FM FRESH</span>
<span class="t" style="left:10.22px;top:853.34px;font-size:23.11px;color:#fff;transform:scaleX(0.9383);">SKÄRGÅRDSRADION</span>
<span class="t" style="left:10.23px;top:891.24px;font-size:23.11px;color:#fff;transform:scaleX(0.9346);">STAR FM</span>
<div class="r" style="left:291.3px;top:410.8px;width:9.6px;height:514.2px;background:#0a2444;"></div>
<div class="r" style="left:292.2px;top:410.8px;width:7.8px;height:514.2px;background:#eeeeee;"></div>
<div class="r" style="left:299.9px;top:410.8px;width:271.7px;height:514.2px;background:#1c5a89;"></div>
<div class="r" style="left:299.9px;top:410.8px;width:271.7px;height:50.2px;background:#0f2d52;"></div>
<span class="t" style="left:307.39px;top:420.49px;font-size:29.07px;color:#fff;transform:scaleX(1.0008);">Service Quality</span>
<span class="t" style="left:315.44px;top:488.61px;font-size:20.78px;color:#fff;transform:scaleX(0.9204);">SNR (dB)</span>
<div class="r" style="left:495.1px;top:478.3px;width:60.2px;height:37px;background:#868686;"></div>
<div class="r" style="left:495.1px;top:478.3px;width:46.053000000000004px;height:37px;background:#008000;"></div>
<span class="t" style="left:508.05px;top:489.11px;font-size:18.30px;color:#fff;transform:scaleX(0.9281);">27,1</span>
<span class="t" style="left:314.73px;top:534.67px;font-size:20.78px;color:#fff;transform:scaleX(0.9455);">FIC (ok %)</span>
<div class="r" style="left:495.1px;top:524.4px;width:60.2px;height:37px;background:#868686;"></div>
<div class="r" style="left:495.1px;top:524.4px;width:60.2px;height:37px;background:#008000;"></div>
<span class="t" style="left:510.04px;top:535.21px;font-size:18.30px;color:#fff;transform:scaleX(0.9881);">100</span>
<span class="t" style="left:314.74px;top:580.73px;font-size:20.78px;color:#fff;transform:scaleX(0.9379);">RS (ok %)</span>
<div class="r" style="left:495.1px;top:570.5px;width:60.2px;height:37px;background:#868686;"></div>
<span class="t" style="left:314.61px;top:626.79px;font-size:20.78px;color:#fff;transform:scaleX(1.0187);">Null Symbol</span>
<div class="r" style="left:495.1px;top:616.6px;width:60.2px;height:37px;background:#868686;"></div>
<div class="r" style="left:495.1px;top:616.6px;width:60.2px;height:37px;background:#008000;"></div>
<span class="t" style="left:315.38px;top:672.85px;font-size:20.78px;color:#fff;transform:scaleX(0.9875);">SymbolTime (ms)</span>
<div class="r" style="left:495.1px;top:662.7px;width:60.2px;height:37px;background:#868686;"></div>
<div class="r" style="left:495.1px;top:662.7px;width:8.729px;height:37px;background:#008000;"></div>
<span class="t" style="left:508.21px;top:673.51px;font-size:18.30px;color:#fff;transform:scaleX(0.9463);">0,22</span>
<span class="t" style="left:314.68px;top:718.91px;font-size:20.78px;color:#fff;transform:scaleX(0.9732);">FrameTime (ms)</span>
<div class="r" style="left:495.1px;top:708.8px;width:60.2px;height:37px;background:#868686;"></div>
<div class="r" style="left:495.1px;top:708.8px;width:37.625px;height:37px;background:#008000;"></div>
<span class="t" style="left:508.11px;top:719.61px;font-size:18.30px;color:#fff;transform:scaleX(0.9610);">95,9</span>
<div class="r" style="left:570.7px;top:410.8px;width:6.3px;height:514.2px;background:#06203c;"></div>
<div class="r" style="left:571.8px;top:410.8px;width:4.3px;height:514.2px;background:#b9c1cd;"></div>
<div class="r" style="left:576.1px;top:410.8px;width:416.6px;height:514.2px;background:#1c5a89;"></div>
<div class="r" style="left:576.1px;top:410.8px;width:416.6px;height:101px;background:#0f2d52;"></div>
<div class="r" style="left:984.9px;top:512px;width:1.2px;height:413px;background:#4a80b0;"></div>
<div class="r" style="left:576.1px;top:463px;width:9px;height:462px;background:#1c5a89;"></div>
<svg class="r" style="left:588.1px;top:422.4px" width="186.60000000000002" height="40.30000000000001"><path d="M0.5 40.30000000000001 L0.5 5 Q0.5 0.5 5 0.5 L170.60000000000002 0.5 Q182.6 0.5 186.10000000000002 16 L186.10000000000002 40.30000000000001 Z" fill="#848484"/><path d="M0.5 40.30000000000001 L0.5 5 Q0.5 0.5 5 0.5 L170.60000000000002 0.5 Q182.6 0.5 186.10000000000002 16 L186.10000000000002 40.30000000000001" fill="none" stroke="#929292" stroke-width="1"/></svg>
<svg class="r" style="left:775.8px;top:422.4px" width="234.20000000000005" height="40.30000000000001"><path d="M0.5 40.30000000000001 L0.5 5 Q0.5 0.5 5 0.5 L218.20000000000005 0.5 Q230.2 0.5 233.70000000000005 16 L233.70000000000005 40.30000000000001 Z" fill="#848484"/><path d="M0.5 40.30000000000001 L0.5 5 Q0.5 0.5 5 0.5 L218.20000000000005 0.5 Q230.2 0.5 233.70000000000005 16 L233.70000000000005 40.30000000000001" fill="none" stroke="#929292" stroke-width="1"/></svg>
<svg class="r" style="left:588.1px;top:471.3px" width="142.19999999999993" height="40.69999999999999"><path d="M0.5 40.69999999999999 L0.5 5 Q0.5 0.5 5 0.5 L126.19999999999993 0.5 Q138.2 0.5 141.69999999999993 16 L141.69999999999993 40.69999999999999 Z" fill="#848484"/><path d="M0.5 40.69999999999999 L0.5 5 Q0.5 0.5 5 0.5 L126.19999999999993 0.5 Q138.2 0.5 141.69999999999993 16 L141.69999999999993 40.69999999999999" fill="none" stroke="#929292" stroke-width="1"/></svg>
<svg class="r" style="left:847.2px;top:471.3px" width="162.79999999999995" height="40.69999999999999"><path d="M0.5 40.69999999999999 L0.5 5 Q0.5 0.5 5 0.5 L146.79999999999995 0.5 Q158.8 0.5 162.29999999999995 16 L162.29999999999995 40.69999999999999 Z" fill="#848484"/><path d="M0.5 40.69999999999999 L0.5 5 Q0.5 0.5 5 0.5 L146.79999999999995 0.5 Q158.8 0.5 162.29999999999995 16 L162.29999999999995 40.69999999999999" fill="none" stroke="#929292" stroke-width="1"/></svg>
<svg class="r" style="left:730.5px;top:471.3px" width="116.20000000000005" height="41.19999999999999"><path d="M0.5 41.19999999999999 L0.5 5 Q0.5 0.5 5 0.5 L100.20000000000005 0.5 Q112.2 0.5 115.70000000000005 16 L115.70000000000005 41.19999999999999 Z" fill="#1c5a89"/><path d="M0.5 41.19999999999999 L0.5 5 Q0.5 0.5 5 0.5 L100.20000000000005 0.5 Q112.2 0.5 115.70000000000005 16 L115.70000000000005 41.19999999999999" fill="none" stroke="#4a80ad" stroke-width="1"/></svg>
<span class="t" style="left:658.70px;top:431.78px;font-size:26.60px;color:#dcdcdc;transform:scaleX(0.8786);">AAC</span>
<span class="t" style="left:845.52px;top:431.78px;font-size:26.60px;color:#dcdcdc;transform:scaleX(0.9878);">Options</span>
<span class="t" style="left:633.35px;top:481.80px;font-size:25.87px;color:#dcdcdc;transform:scaleX(0.9007);">Sync</span>
<span class="t" style="left:775.11px;top:481.80px;font-size:25.87px;color:#fff;transform:scaleX(0.9381);">TII</span>
<span class="t" style="left:894.00px;top:481.70px;font-size:25.87px;color:#dcdcdc;transform:scaleX(1.0071);">Audio</span>
<div class="r" style="left:628.5px;top:527.6999999999999px;width:13.2px;height:13.2px;background:#ff0000;border-radius:50%"></div>
<div class="r" style="left:672px;top:527.5px;width:13px;height:13px;background:#0f2d4c;"></div>
<div class="r" style="left:598.4px;top:556.4px;width:372.1px;height:1px;background:#6b9cc4;"></div>
<div class="r" style="left:598.4px;top:609.6px;width:372.1px;height:1px;background:#6b9cc4;"></div>
<span class="t" style="left:597.90px;top:586.35px;font-size:21.80px;color:#fff;transform:scaleX(1.0322);">Pattern</span>
<span class="t" style="left:698.51px;top:586.35px;font-size:21.80px;color:#fff;transform:scaleX(1.0826);">MainId</span>
<span class="t" style="left:798.19px;top:586.35px;font-size:21.80px;color:#fff;transform:scaleX(1.0255);">SubId</span>
<span class="t" style="left:885.67px;top:586.35px;font-size:21.80px;color:#fff;transform:scaleX(1.0475);">Strength</span>
<div class="r" style="left:992.6px;top:410.8px;width:7.4px;height:514.2px;background:#f0f2f4;"></div>
<div class="r" style="left:1000.2px;top:410.8px;width:873px;height:514.2px;background:#000;"></div>
<div class="r" style="left:1000.2px;top:410.8px;width:873px;height:30.7px;background:#0f2d52;"></div>
<span class="t" style="left:1287.73px;top:413.78px;font-size:22.82px;color:#fff;transform:scaleX(0.9379);">Channel Impulse Response (CIR)</span>
<svg class="r" style="left:1838px;top:414px" width="35" height="26"><path d="M3.9 4.4 L23 4.4 L13.4 20 Z" fill="none" stroke="#d0dcea" stroke-width="1.0"/><path d="M32.5 5 L38 10 M32.5 22 L38 17" stroke="#c0673a" stroke-width="2.4"/></svg>
<div class="r" style="left:1248.2px;top:441.5px;width:1px;height:476.5px;background:#2c2c2c;"></div>
<div class="r" style="left:1000.2px;top:918.1px;width:873px;height:7px;background:#7c7f82;"></div>
<div class="r" style="left:1015.9000000000001px;top:458.9px;width:19.0px;height:19.0px;background:#e2e2e2;border-radius:50%"></div>
<span class="t" style="left:1040.66px;top:460.57px;font-size:18.46px;color:#fff;transform:scaleX(0.9106);">Freeze</span>
<div class="r" style="left:1122.2px;top:458.9px;width:19.0px;height:19.0px;background:#e2e2e2;border-radius:50%"></div>
<span class="t" style="left:1147.40px;top:460.57px;font-size:18.46px;color:#fff;transform:scaleX(0.9714);">Gradient</span>
<span class="t" style="left:1022.69px;top:522.67px;font-size:18.46px;color:#fff;transform:scaleX(0.9767);">Smoothing Level</span>
<div class="r" style="left:1025.0px;top:549px;width:1.6px;height:6px;background:#9a9a9a;"></div>
<div class="r" style="left:1044.7px;top:550px;width:1.6px;height:5px;background:#9a9a9a;"></div>
<div class="r" style="left:1064.4px;top:550px;width:1.6px;height:5px;background:#9a9a9a;"></div>
<div class="r" style="left:1084.1px;top:550px;width:1.6px;height:5px;background:#9a9a9a;"></div>
<div class="r" style="left:1103.8px;top:550px;width:1.6px;height:5px;background:#9a9a9a;"></div>
<div class="r" style="left:1123.5px;top:550px;width:1.6px;height:5px;background:#9a9a9a;"></div>
<div class="r" style="left:1143.2px;top:550px;width:1.6px;height:5px;background:#9a9a9a;"></div>
<div class="r" style="left:1162.9px;top:550px;width:1.6px;height:5px;background:#9a9a9a;"></div>
<div class="r" style="left:1182.6px;top:550px;width:1.6px;height:5px;background:#9a9a9a;"></div>
<div class="r" style="left:1202.3px;top:550px;width:1.6px;height:5px;background:#9a9a9a;"></div>
<div class="r" style="left:1222.0px;top:549px;width:1.6px;height:6px;background:#9a9a9a;"></div>
<div class="r" style="left:1016px;top:564.1px;width:217.0999999999999px;height:3.6px;background:#e8e8e8;border-radius:1.8px"></div>
<div class="r" style="left:1035.4px;top:555.9px;width:20px;height:20px;background:radial-gradient(circle at 50% 18%,#e6e6e6,#b4b4b4 35%,#7a7a7a 65%,#4a4a4a 95%);border-radius:50%"></div>
<span class="t" style="left:1022.76px;top:602.77px;font-size:18.46px;color:#fff;transform:scaleX(0.9777);">Zoom X</span>
<div class="r" style="left:1016px;top:639.1px;width:217.0999999999999px;height:3.6px;background:#e8e8e8;border-radius:1.8px"></div>
<div class="r" style="left:1016.5999999999999px;top:630.9px;width:20px;height:20px;background:radial-gradient(circle at 50% 18%,#e6e6e6,#b4b4b4 35%,#7a7a7a 65%,#4a4a4a 95%);border-radius:50%"></div>
<span class="t" style="left:1022.76px;top:677.97px;font-size:18.46px;color:#fff;transform:scaleX(0.9725);">Zoom Y</span>
<div class="r" style="left:1016px;top:713.8000000000001px;width:217.0999999999999px;height:3.6px;background:#e8e8e8;border-radius:1.8px"></div>
<div class="r" style="left:1016.5999999999999px;top:705.6px;width:20px;height:20px;background:radial-gradient(circle at 50% 18%,#e6e6e6,#b4b4b4 35%,#7a7a7a 65%,#4a4a4a 95%);border-radius:50%"></div>
<span class="t" style="left:1023.13px;top:752.67px;font-size:18.46px;color:#fff;transform:scaleX(0.9467);">x-Axis</span>
<div class="r" style="left:1032.5px;top:782.4px;width:17.2px;height:17.2px;background:#8c8c8c;border-radius:50%"></div>
<div class="r" style="left:1033.8px;top:783.7px;width:14.6px;height:14.6px;background:#fff;border-radius:50%"></div>
<span class="t" style="left:1059.13px;top:782.77px;font-size:18.46px;color:#fff;transform:scaleX(0.9268);">Samples</span>
<div class="r" style="left:1032.5px;top:812.4px;width:17.2px;height:17.2px;background:#8c8c8c;border-radius:50%"></div>
<div class="r" style="left:1033.8px;top:813.7px;width:14.6px;height:14.6px;background:#fff;border-radius:50%"></div>
<div class="r" style="left:1036.5px;top:816.4px;width:9.2px;height:9.2px;background:#3a3a3a;border-radius:50%"></div>
<span class="t" style="left:1058.49px;top:812.62px;font-size:18.46px;color:#fff;transform:scaleX(0.9567);">Distance</span>
<div class="r" style="left:1032.5px;top:842.4px;width:17.2px;height:17.2px;background:#8c8c8c;border-radius:50%"></div>
<div class="r" style="left:1033.8px;top:843.7px;width:14.6px;height:14.6px;background:#fff;border-radius:50%"></div>
<span class="t" style="left:1059.55px;top:842.47px;font-size:18.46px;color:#fff;transform:scaleX(0.9544);">Time</span>
<svg class="r" style="left:1372px;top:469.0px;overflow:visible" width="475" height="357.0"><rect x="0" y="0" width="116" height="355.0" fill="#3f3f3f"/><line x1="21.5" y1="0" x2="21.5" y2="355.0" stroke="#9a9a9a" stroke-width="1"/><line x1="53.5" y1="0" x2="53.5" y2="355.0" stroke="#9a9a9a" stroke-width="1"/><line x1="85.5" y1="0" x2="85.5" y2="355.0" stroke="#9a9a9a" stroke-width="1"/><line x1="148.5" y1="0" x2="148.5" y2="355.0" stroke="#9a9a9a" stroke-width="1"/><line x1="180.5" y1="0" x2="180.5" y2="355.0" stroke="#9a9a9a" stroke-width="1"/><line x1="212.5" y1="0" x2="212.5" y2="355.0" stroke="#9a9a9a" stroke-width="1"/><line x1="243.5" y1="0" x2="243.5" y2="355.0" stroke="#9a9a9a" stroke-width="1"/><line x1="275.5" y1="0" x2="275.5" y2="355.0" stroke="#9a9a9a" stroke-width="1"/><line x1="307.5" y1="0" x2="307.5" y2="355.0" stroke="#9a9a9a" stroke-width="1"/><line x1="339.5" y1="0" x2="339.5" y2="355.0" stroke="#9a9a9a" stroke-width="1"/><line x1="370.5" y1="0" x2="370.5" y2="355.0" stroke="#9a9a9a" stroke-width="1"/><line x1="402.5" y1="0" x2="402.5" y2="355.0" stroke="#9a9a9a" stroke-width="1"/><line x1="434.5" y1="0" x2="434.5" y2="355.0" stroke="#9a9a9a" stroke-width="1"/><line x1="466.5" y1="0" x2="466.5" y2="355.0" stroke="#9a9a9a" stroke-width="1"/><line x1="0" y1="0.5" x2="474" y2="0.5" stroke="#9c9c9c" stroke-width="1"/><line x1="0" y1="71.5" x2="474" y2="71.5" stroke="#9c9c9c" stroke-width="1"/><line x1="0" y1="142.5" x2="474" y2="142.5" stroke="#9c9c9c" stroke-width="1"/><line x1="0" y1="213.5" x2="474" y2="213.5" stroke="#9c9c9c" stroke-width="1"/><line x1="0" y1="284.5" x2="474" y2="284.5" stroke="#9c9c9c" stroke-width="1"/><line x1="0" y1="355.5" x2="474" y2="355.5" stroke="#9c9c9c" stroke-width="1"/><rect x="-1" y="0" width="476" height="2" fill="#929292"/><rect x="473" y="0" width="2" height="356.2" fill="#909090"/><rect x="-1" y="355.0" width="476" height="1.2" fill="#8e8e8e"/><rect x="-1" y="2" width="1" height="353.0" fill="#b08a8a"/><rect x="0" y="2" width="1.4" height="353.0" fill="#a82432"/><rect x="1.4" y="2" width="0.9" height="353.0" fill="#6a3034"/><polyline points="0.8,306.0 1.2,327.9 1.6,341.5 2.1,344.1 2.5,299.4 2.9,307.2 3.3,355.0 3.7,309.7 4.2,308.4 4.6,310.7 5.0,276.8 5.4,313.7 5.8,284.4 6.3,339.9 6.7,336.9 7.1,333.3 7.5,298.9 7.9,323.9 8.4,330.9 8.8,318.4 9.2,308.4 9.6,317.1 10.0,329.1 10.5,318.4 10.9,311.9 11.3,335.5 11.7,308.7 12.1,294.0 12.6,263.9 13.0,314.4 13.4,319.7 13.8,272.7 14.2,351.9 14.7,320.5 15.1,297.1 15.5,322.8 15.9,295.0 16.3,291.3 16.8,355.0 17.2,301.8 17.6,293.6 18.0,305.3 18.4,282.5 18.9,355.0 19.3,355.0 19.7,303.2 20.1,342.6 20.5,282.7 21.0,278.5 21.4,310.8 21.8,303.6 22.2,273.1 22.6,297.0 23.1,339.8 23.5,284.3 23.9,284.0 24.3,338.6 24.7,353.5 25.2,289.6 25.6,294.8 26.0,314.3 26.4,321.8 26.8,302.3 27.3,311.2 27.7,278.2 28.1,292.8 28.5,272.0 28.9,281.7 29.4,298.8 29.8,314.7 30.2,308.6 30.6,285.2 31.0,302.5 31.5,323.9 31.9,290.3 32.3,278.1 32.7,301.5 33.1,355.0 33.6,315.8 34.0,289.2 34.4,310.5 34.8,334.7 35.2,316.5 35.7,281.6 36.1,299.9 36.5,295.5 36.9,331.3 37.3,311.4 37.8,351.2 38.2,308.1 38.6,322.0 39.0,339.0 39.4,289.8 39.9,333.8 40.3,307.0 40.7,287.5 41.1,288.3 41.5,332.6 42.0,306.4 42.4,309.3 42.8,317.4 43.2,307.3 43.6,308.4 44.1,325.8 44.5,286.5 44.9,308.5 45.3,327.3 45.7,291.5 46.2,337.0 46.6,332.1 47.0,300.7 47.4,308.8 47.8,322.6 48.3,293.6 48.7,284.7 49.1,314.1 49.5,318.2 49.9,310.1 50.4,299.7 50.8,355.0 51.2,297.1 51.6,300.8 52.0,297.1 52.5,294.9 52.9,273.2 53.3,337.6 53.7,310.7 54.1,298.0 54.6,286.3 55.0,321.8 55.4,320.4 55.8,300.0 56.2,284.9 56.7,292.0 57.1,317.3 57.5,286.2 57.9,268.6 58.3,290.0 58.8,311.5 59.2,355.0 59.6,322.0 60.0,294.8 60.4,303.6 60.9,293.9 61.3,298.3 61.7,320.5 62.1,310.3 62.5,318.1 63.0,297.2 63.4,349.1 63.8,325.3 64.2,292.4 64.6,295.5 65.1,306.0 65.5,312.7 65.9,317.3 66.3,305.0 66.7,333.7 67.2,296.0 67.6,282.0 68.0,286.7 68.4,286.1 68.8,292.0 69.3,296.8 69.7,289.6 70.1,275.1 70.5,274.1 70.9,320.6 71.4,298.1 71.8,280.3 72.2,277.2 72.6,311.7 73.0,306.3 73.5,285.6 73.9,329.0 74.3,290.2 74.7,314.1 75.1,276.1 75.6,269.3 76.0,272.3 76.4,269.6 76.8,280.8 77.2,274.8 77.7,293.0 78.1,322.5 78.5,279.6 78.9,303.9 79.3,322.1 79.8,300.0 80.2,297.2 80.6,275.1 81.0,250.9 81.4,264.1 81.9,297.4 82.3,298.7 82.7,291.7 83.1,305.9 83.5,262.5 84.0,304.8 84.4,340.3 84.8,282.4 85.2,321.1 85.6,320.6 86.1,314.8 86.5,306.7 86.9,286.2 87.3,287.8 87.7,270.7 88.2,258.6 88.6,255.4 89.0,277.5 89.4,260.2 89.8,265.1 90.3,286.9 90.7,290.9 91.1,316.4 91.5,285.5 91.9,273.2 92.4,296.3 92.8,277.6 93.2,289.3 93.6,278.1 94.0,279.5 94.5,282.1 94.9,288.7 95.3,275.0 95.7,266.4 96.1,277.2 96.6,260.6 97.0,286.9 97.4,281.4 97.8,263.6 98.2,269.0 98.7,258.1 99.1,277.3 99.5,254.8 99.9,294.2 100.3,260.5 100.8,260.6 101.2,263.1 101.6,295.3 102.0,271.7 102.4,277.8 102.9,254.1 103.3,251.8 103.7,252.5 104.1,254.4 104.5,243.9 105.0,253.2 105.4,239.3 105.8,249.2 106.2,253.1 106.6,250.3 107.1,244.0 107.5,245.5 107.9,237.9 108.3,231.1 108.7,236.8 109.2,235.4 109.6,221.3 110.0,222.0 110.4,227.5 110.8,212.8 111.3,217.8 111.7,204.5 112.1,224.0 112.5,218.9 112.9,199.8 113.4,192.3 113.8,189.0 114.2,183.7 114.6,170.9 115.0,162.6 115.5,155.2 115.9,136.9 116.3,126.1 116.7,110.2 117.1,120.9 117.6,131.7 118.0,148.0 118.4,158.1 118.8,167.1 119.2,175.0 119.7,182.7 120.1,192.7 120.5,193.0 120.9,198.3 121.3,199.1 121.8,204.0 122.2,221.4 122.6,221.1 123.0,213.9 123.4,226.2 123.9,233.8 124.3,224.9 124.7,226.8 125.1,229.2 125.5,239.1 126.0,258.9 126.4,231.9 126.8,244.0 127.2,248.1 127.6,253.9 128.1,249.2 128.5,265.8 128.9,276.0 129.3,252.0 129.7,255.9 130.2,264.4 130.6,257.4 131.0,258.1 131.4,270.7 131.8,281.3 132.3,279.1 132.7,285.6 133.1,307.1 133.5,285.0 133.9,299.8 134.4,293.3 134.8,277.9 135.2,316.9 135.6,311.9 136.0,282.5 136.5,282.8 136.9,327.1 137.3,296.3 137.7,300.0 138.1,318.0 138.6,281.4 139.0,285.2 139.4,298.8 139.8,289.3 140.2,276.7 140.7,281.5 141.1,275.4 141.5,277.3 141.9,275.8 142.3,307.9 142.8,252.3 143.2,292.0 143.6,270.1 144.0,271.2 144.4,265.0 144.9,251.0 145.3,267.9 145.7,262.7 146.1,274.9 146.5,288.1 147.0,292.3 147.4,267.6 147.8,268.6 148.2,332.5 148.6,274.9 149.1,309.5 149.5,263.9 149.9,294.5 150.3,316.5 150.7,286.7 151.2,307.9 151.6,297.0 152.0,246.8 152.4,277.5 152.8,269.3 153.3,270.7 153.7,316.5 154.1,274.5 154.5,273.6 154.9,245.9 155.4,281.2 155.8,267.5 156.2,274.7 156.6,312.3 157.0,256.1 157.5,239.7 157.9,272.3 158.3,288.1 158.7,289.4 159.1,286.4 159.6,278.5 160.0,271.5 160.4,253.1 160.8,288.6 161.2,272.8 161.7,275.8 162.1,251.3 162.5,280.4 162.9,305.8 163.3,270.2 163.8,275.3 164.2,262.4 164.6,280.3 165.0,256.6 165.4,255.8 165.9,284.1 166.3,275.1 166.7,282.2 167.1,289.6 167.5,264.0 168.0,257.5 168.4,257.7 168.8,257.8 169.2,309.7 169.6,278.8 170.1,274.8 170.5,292.5 170.9,278.6 171.3,294.5 171.7,276.3 172.2,312.9 172.6,265.3 173.0,281.4 173.4,285.0 173.8,292.1 174.3,282.4 174.7,269.3 175.1,293.2 175.5,305.5 175.9,299.9 176.4,265.3 176.8,281.1 177.2,275.4 177.6,274.1 178.0,288.2 178.5,267.5 178.9,302.3 179.3,287.9 179.7,263.3 180.1,290.7 180.6,277.7 181.0,310.8 181.4,309.2 181.8,302.9 182.2,296.9 182.7,266.4 183.1,268.3 183.5,258.5 183.9,277.0 184.3,258.0 184.8,313.7 185.2,279.9 185.6,274.2 186.0,247.4 186.4,332.9 186.9,301.2 187.3,297.5 187.7,296.4 188.1,268.0 188.5,281.7 189.0,274.4 189.4,309.6 189.8,287.8 190.2,283.1 190.6,278.9 191.1,294.5 191.5,321.3 191.9,311.1 192.3,290.3 192.7,330.4 193.2,280.1 193.6,262.4 194.0,289.2 194.4,340.1 194.8,317.4 195.3,301.1 195.7,285.0 196.1,292.1 196.5,265.3 196.9,274.8 197.4,283.4 197.8,279.6 198.2,296.5 198.6,323.1 199.0,272.0 199.5,276.7 199.9,322.4 200.3,355.0 200.7,295.4 201.1,314.2 201.6,305.6 202.0,294.0 202.4,305.6 202.8,301.8 203.2,310.9 203.7,279.3 204.1,279.1 204.5,264.1 204.9,293.1 205.3,278.6 205.8,278.1 206.2,283.5 206.6,288.0 207.0,284.9 207.4,293.9 207.9,276.6 208.3,299.6 208.7,290.2 209.1,261.1 209.5,263.0 210.0,257.1 210.4,289.2 210.8,298.1 211.2,263.1 211.6,299.9 212.1,279.0 212.5,293.7 212.9,256.8 213.3,315.6 213.7,281.5 214.2,325.5 214.6,257.5 215.0,306.5 215.4,296.5 215.8,279.2 216.3,312.9 216.7,279.9 217.1,300.7 217.5,276.1 217.9,319.2 218.4,295.8 218.8,292.9 219.2,302.0 219.6,306.5 220.0,304.4 220.5,276.0 220.9,297.3 221.3,299.3 221.7,308.4 222.1,301.3 222.6,302.0 223.0,290.2 223.4,332.1 223.8,305.1 224.2,285.9 224.7,349.4 225.1,298.1 225.5,287.2 225.9,273.9 226.3,339.2 226.8,311.3 227.2,323.5 227.6,324.7 228.0,322.2 228.4,291.3 228.9,284.0 229.3,326.0 229.7,348.5 230.1,291.2 230.5,304.3 231.0,320.0 231.4,290.4 231.8,272.8 232.2,312.4 232.6,290.3 233.1,299.8 233.5,267.8 233.9,322.2 234.3,281.8 234.7,309.2 235.2,286.5 235.6,331.5 236.0,326.0 236.4,287.1 236.8,295.6 237.3,282.1 237.7,305.7 238.1,304.1 238.5,344.6 238.9,295.8 239.4,317.4 239.8,301.3 240.2,283.4 240.6,293.0 241.0,307.7 241.5,294.5 241.9,312.3 242.3,347.6 242.7,321.2 243.1,318.4 243.6,342.4 244.0,317.6 244.4,287.9 244.8,349.9 245.2,301.2 245.7,289.5 246.1,294.4 246.5,286.3 246.9,289.6 247.3,338.7 247.8,338.6 248.2,340.3 248.6,323.5 249.0,334.9 249.4,314.0 249.9,314.8 250.3,314.5 250.7,312.8 251.1,322.8 251.5,337.5 252.0,332.0 252.4,304.8 252.8,315.8 253.2,303.1 253.6,297.3 254.1,305.6 254.5,347.6 254.9,313.7 255.3,304.2 255.7,307.2 256.2,320.2 256.6,301.3 257.0,315.8 257.4,324.0 257.8,298.0 258.3,272.1 258.7,296.0 259.1,319.0 259.5,292.2 259.9,305.1 260.4,320.6 260.8,321.0 261.2,319.6 261.6,277.8 262.0,299.7 262.5,297.1 262.9,291.0 263.3,314.3 263.7,322.8 264.1,303.5 264.6,323.7 265.0,293.2 265.4,297.2 265.8,290.2 266.2,354.2 266.7,273.2 267.1,300.1 267.5,301.8 267.9,304.5 268.3,306.4 268.8,308.7 269.2,333.9 269.6,317.2 270.0,275.7 270.4,355.0 270.9,301.4 271.3,308.9 271.7,280.9 272.1,285.5 272.5,294.7 273.0,291.8 273.4,321.4 273.8,355.0 274.2,311.2 274.6,299.3 275.1,333.3 275.5,322.7 275.9,324.1 276.3,324.4 276.7,331.4 277.2,318.3 277.6,286.7 278.0,346.8 278.4,315.1 278.8,316.8 279.3,311.4 279.7,288.2 280.1,317.5 280.5,301.9 280.9,355.0 281.4,318.1 281.8,330.3 282.2,320.5 282.6,336.8 283.0,276.7 283.5,313.5 283.9,321.6 284.3,315.8 284.7,318.6 285.1,302.9 285.6,287.0 286.0,323.3 286.4,317.6 286.8,329.2 287.2,301.8 287.7,307.7 288.1,284.9 288.5,291.6 288.9,349.2 289.3,323.8 289.8,302.9 290.2,355.0 290.6,352.6 291.0,308.9 291.4,320.4 291.9,312.5 292.3,311.9 292.7,308.1 293.1,323.2 293.5,305.0 294.0,345.2 294.4,313.1 294.8,310.1 295.2,324.1 295.6,301.2 296.1,308.9 296.5,310.6 296.9,283.5 297.3,325.2 297.7,307.9 298.2,312.0 298.6,312.1 299.0,330.2 299.4,296.0 299.8,297.4 300.3,327.7 300.7,355.0 301.1,307.0 301.5,351.2 301.9,329.4 302.4,287.4 302.8,277.7 303.2,287.8 303.6,303.1 304.0,320.6 304.5,302.8 304.9,299.9 305.3,334.9 305.7,299.8 306.1,324.0 306.6,308.6 307.0,304.6 307.4,290.5 307.8,323.7 308.2,313.8 308.7,308.4 309.1,322.7 309.5,308.9 309.9,288.3 310.3,306.7 310.8,311.2 311.2,338.8 311.6,328.1 312.0,295.6 312.4,301.8 312.9,317.1 313.3,353.6 313.7,344.3 314.1,312.5 314.5,307.2 315.0,355.0 315.4,317.4 315.8,353.4 316.2,316.5 316.6,326.9 317.1,332.9 317.5,312.3 317.9,331.8 318.3,300.0 318.7,317.4 319.2,305.4 319.6,316.7 320.0,318.7 320.4,314.2 320.8,293.3 321.3,300.6 321.7,318.8 322.1,311.9 322.5,321.0 322.9,291.6 323.4,302.7 323.8,335.8 324.2,352.6 324.6,316.6 325.0,299.7 325.5,329.8 325.9,312.1 326.3,295.5 326.7,299.9 327.1,313.2 327.6,336.7 328.0,324.1 328.4,317.4 328.8,312.4 329.2,311.2 329.7,354.8 330.1,302.2 330.5,328.2 330.9,312.9 331.3,343.1 331.8,285.8 332.2,345.0 332.6,293.2 333.0,291.1 333.4,331.6 333.9,314.2 334.3,317.8 334.7,335.3 335.1,343.4 335.5,322.3 336.0,339.9 336.4,286.0 336.8,335.8 337.2,355.0 337.6,354.4 338.1,325.2 338.5,310.5 338.9,355.0 339.3,338.5 339.7,327.8 340.2,332.3 340.6,336.1 341.0,329.7 341.4,291.9 341.8,315.7 342.3,306.5 342.7,303.9 343.1,317.3 343.5,314.6 343.9,328.0 344.4,298.5 344.8,290.5 345.2,305.8 345.6,323.6 346.0,289.0 346.5,353.7 346.9,316.6 347.3,342.2 347.7,308.9 348.1,325.1 348.6,316.7 349.0,340.0 349.4,315.8 349.8,355.0 350.2,311.4 350.7,328.3 351.1,312.8 351.5,295.0 351.9,355.0 352.3,355.0 352.8,317.8 353.2,308.4 353.6,311.6 354.0,301.1 354.4,316.6 354.9,355.0 355.3,332.2 355.7,305.3 356.1,301.6 356.5,320.8 357.0,323.7 357.4,339.3 357.8,318.5 358.2,341.2 358.6,355.0 359.1,319.7 359.5,309.8 359.9,355.0 360.3,345.7 360.7,292.7 361.2,348.9 361.6,338.0 362.0,340.1 362.4,343.7 362.8,317.1 363.3,310.6 363.7,323.8 364.1,323.1 364.5,323.9 364.9,329.2 365.4,298.9 365.8,338.7 366.2,293.6 366.6,299.8 367.0,320.6 367.5,303.8 367.9,300.2 368.3,305.2 368.7,300.1 369.1,331.3 369.6,280.8 370.0,296.0 370.4,303.7 370.8,322.1 371.2,299.5 371.7,309.8 372.1,283.4 372.5,318.1 372.9,295.3 373.3,292.3 373.8,333.2 374.2,317.5 374.6,296.8 375.0,355.0 375.4,355.0 375.9,313.1 376.3,325.8 376.7,335.8 377.1,342.0 377.5,311.2 378.0,326.8 378.4,312.9 378.8,308.5 379.2,311.3 379.6,355.0 380.1,314.8 380.5,354.2 380.9,327.9 381.3,315.4 381.7,319.3 382.2,316.3 382.6,320.2 383.0,302.5 383.4,306.0 383.8,313.9 384.3,341.3 384.7,278.4 385.1,327.1 385.5,300.2 385.9,332.3 386.4,297.1 386.8,324.6 387.2,300.4 387.6,328.4 388.0,342.9 388.5,314.2 388.9,270.8 389.3,330.3 389.7,319.7 390.1,288.2 390.6,314.0 391.0,307.6 391.4,342.3 391.8,298.7 392.2,317.8 392.7,336.2 393.1,302.0 393.5,278.4 393.9,316.2 394.3,320.0 394.8,319.4 395.2,297.3 395.6,318.1 396.0,343.9 396.4,316.8 396.9,323.9 397.3,324.5 397.7,328.2 398.1,310.7 398.5,298.0 399.0,318.2 399.4,286.8 399.8,355.0 400.2,355.0 400.6,318.4 401.1,283.5 401.5,337.7 401.9,340.2 402.3,311.2 402.7,271.2 403.2,287.3 403.6,297.4 404.0,305.8 404.4,298.6 404.8,290.9 405.3,355.0 405.7,312.8 406.1,291.5 406.5,285.3 406.9,342.8 407.4,347.6 407.8,297.9 408.2,309.5 408.6,300.9 409.0,339.0 409.5,355.0 409.9,338.5 410.3,294.9 410.7,341.7 411.1,340.0 411.6,324.3 412.0,311.6 412.4,312.9 412.8,299.8 413.2,308.1 413.7,318.8 414.1,346.4 414.5,355.0 414.9,315.8 415.3,329.5 415.8,355.0 416.2,326.7 416.6,284.3 417.0,312.6 417.4,282.1 417.9,295.3 418.3,318.5 418.7,325.3 419.1,351.5 419.5,324.9 420.0,316.3 420.4,311.3 420.8,312.1 421.2,295.4 421.6,306.8 422.1,319.6 422.5,307.4 422.9,308.6 423.3,287.2 423.7,291.9 424.2,288.3 424.6,295.2 425.0,306.1 425.4,294.7 425.8,305.6 426.3,317.0 426.7,333.1 427.1,307.4 427.5,316.8 427.9,288.5 428.4,285.3 428.8,352.7 429.2,311.4 429.6,328.3 430.0,317.3 430.5,307.3 430.9,305.4 431.3,264.0 431.7,319.1 432.1,297.5 432.6,323.8 433.0,321.5 433.4,285.1 433.8,291.2 434.2,288.3 434.7,304.9 435.1,317.7 435.5,323.8 435.9,262.8 436.3,295.5 436.8,288.0 437.2,344.4 437.6,305.0 438.0,291.7 438.4,291.1 438.9,271.3 439.3,284.2 439.7,293.7 440.1,309.7 440.5,308.9 441.0,355.0 441.4,298.8 441.8,317.9 442.2,296.8 442.6,298.3 443.1,285.1 443.5,313.9 443.9,285.4 444.3,290.4 444.7,285.0 445.2,355.0 445.6,320.8 446.0,297.2 446.4,339.2 446.8,312.7 447.3,332.0 447.7,319.0 448.1,305.7 448.5,303.2 448.9,284.1 449.4,292.7 449.8,346.6 450.2,290.2 450.6,328.9 451.0,296.8 451.5,301.1 451.9,337.9 452.3,312.6 452.7,311.0 453.1,264.8 453.6,316.7 454.0,336.9 454.4,285.0 454.8,338.0 455.2,275.3 455.7,297.9 456.1,289.1 456.5,312.3 456.9,300.3 457.3,320.6 457.8,316.7 458.2,355.0 458.6,290.8 459.0,332.7 459.4,301.7 459.9,325.1 460.3,308.2 460.7,322.6 461.1,305.5 461.5,292.3 462.0,293.3 462.4,331.1 462.8,271.5 463.2,316.2 463.6,348.0 464.1,314.0 464.5,313.3 464.9,297.3 465.3,304.2 465.7,325.2 466.2,325.4 466.6,305.2 467.0,294.9 467.4,330.1 467.8,324.5 468.3,313.0 468.7,336.5 469.1,311.5 469.5,332.0 469.9,343.2 470.4,301.3 470.8,333.8 471.2,299.0 471.6,331.8 472.0,334.6 472.5,293.0 472.9,305.0 473.3,312.7" fill="none" stroke="#f6f6f6" stroke-width="1.1" stroke-linejoin="bevel" shape-rendering="crispEdges"/><polygon points="93.0,265.4 93.8,264.0 94.6,262.7 95.4,261.3 96.2,259.9 97.0,258.4 97.8,257.0 98.5,255.6 99.3,254.2 100.1,252.8 100.9,251.3 101.7,249.9 102.5,248.5 103.3,245.8 104.1,243.0 104.9,240.3 105.7,237.6 106.5,234.8 107.3,230.4 108.1,225.5 108.9,220.5 109.7,217.0 110.5,213.5 111.2,207.7 112.0,200.2 112.8,192.8 113.6,185.3 114.4,173.1 115.2,157.8 116.0,135.7 116.8,107.9 117.6,135.7 118.4,157.8 119.2,173.1 120.0,185.3 120.8,192.8 121.6,200.2 122.4,207.7 123.1,213.5 123.9,217.0 124.7,220.5 125.5,225.5 126.3,230.4 127.1,235.0 127.9,238.6 128.7,242.1 129.5,245.7 130.3,249.2 131.1,252.8 131.9,257.7 131.9,290.4 131.1,285.4 130.3,281.9 129.5,278.3 128.7,274.8 127.9,271.2 127.1,267.7 126.3,263.0 125.5,258.1 124.7,253.2 123.9,245.6 123.1,238.0 122.4,228.1 121.6,216.5 120.8,205.0 120.0,193.5 119.2,177.2 118.4,157.8 117.6,135.7 116.8,107.9 116.0,135.7 115.2,157.8 114.4,176.5 113.6,192.1 112.8,202.9 112.0,213.7 111.2,224.5 110.5,233.8 109.7,240.6 108.9,247.5 108.1,252.4 107.3,257.3 106.5,261.8 105.7,264.6 104.9,267.3 104.1,270.0 103.3,272.7 102.5,275.5 101.7,276.9 100.9,278.3 100.1,279.7 99.3,281.2 98.5,282.6 97.8,284.0 97.0,285.4 96.2,286.8 95.4,288.3 94.6,289.7 93.8,291.0 93.0,292.4" fill="#f4f4f4" shape-rendering="crispEdges"/><line x1="116.5" y1="2" x2="116.5" y2="355.0" stroke="#e8e85a" stroke-width="1" stroke-dasharray="1,1"/><line x1="116.9" y1="44.7" x2="116.9" y2="156.0" stroke="#ffffa6" stroke-width="1.4"/><circle cx="116.8" cy="44.7" r="6" fill="#ffee10"/></svg>
<span class="t c" style="left:1315.40px;top:460.47px;font-size:20.00px;color:#fff;">-10.0</span>
<span class="t c" style="left:1315.40px;top:531.47px;font-size:20.00px;color:#fff;">-20.0</span>
<span class="t c" style="left:1315.40px;top:602.47px;font-size:20.00px;color:#fff;">-30.0</span>
<span class="t c" style="left:1315.40px;top:673.47px;font-size:20.00px;color:#fff;">-40.0</span>
<span class="t c" style="left:1315.40px;top:744.47px;font-size:20.00px;color:#fff;">-50.0</span>
<span class="t c" style="left:1315.40px;top:815.47px;font-size:20.00px;color:#fff;">-60.0</span>
<span class="t c" style="left:1382.13px;top:834.44px;font-size:14.60px;color:#fff;">-60</span>
<span class="t c" style="left:1413.88px;top:854.34px;font-size:14.60px;color:#fff;">-40</span>
<span class="t c" style="left:1445.63px;top:834.44px;font-size:14.60px;color:#fff;">-20</span>
<span class="t c" style="left:1484.71px;top:854.34px;font-size:14.60px;color:#fff;">0</span>
<span class="t c" style="left:1512.34px;top:834.44px;font-size:14.60px;color:#fff;">20</span>
<span class="t c" style="left:1544.31px;top:854.34px;font-size:14.60px;color:#fff;">40</span>
<span class="t c" style="left:1575.84px;top:834.44px;font-size:14.60px;color:#fff;">60</span>
<span class="t c" style="left:1607.66px;top:854.34px;font-size:14.60px;color:#fff;">80</span>
<span class="t c" style="left:1635.10px;top:834.44px;font-size:14.60px;color:#fff;">100</span>
<span class="t c" style="left:1666.85px;top:854.34px;font-size:14.60px;color:#fff;">120</span>
<span class="t c" style="left:1698.60px;top:834.44px;font-size:14.60px;color:#fff;">140</span>
<span class="t c" style="left:1730.35px;top:854.34px;font-size:14.60px;color:#fff;">160</span>
<span class="t c" style="left:1762.10px;top:834.44px;font-size:14.60px;color:#fff;">180</span>
<span class="t c" style="left:1794.04px;top:854.34px;font-size:14.60px;color:#fff;">200</span>
<span class="t c" style="left:1825.79px;top:834.44px;font-size:14.60px;color:#fff;">220</span>
<span class="t c" style="left:1497.49px;top:876.61px;font-size:20.18px;color:#fff;">Distance Difference (km)</span>
<span class="t c" style="left:1275.08px;top:716.30px;font-size:19.99px;color:#fff;transform-origin:0 0;transform:rotate(-90deg)">Magnitude (dB)</span>
</body></html>
